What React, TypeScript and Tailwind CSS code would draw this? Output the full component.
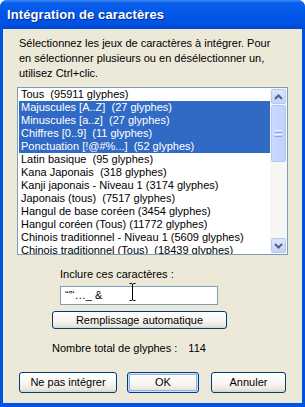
import React from "react";

const rows = [
  "Tous  (95911 glyphes)",
  "Majuscules [A..Z]  (27 glyphes)",
  "Minuscules [a..z]  (27 glyphes)",
  "Chiffres [0..9]  (11 glyphes)",
  "Ponctuation [!@#%...]  (52 glyphes)",
  "Latin basique  (95 glyphes)",
  "Kana Japonais  (318 glyphes)",
  "Kanji japonais - Niveau 1 (3174 glyphes)",
  "Japonais (tous)  (7517 glyphes)",
  "Hangul de base coréen (3454 glyphes)",
  "Hangul coréen (Tous) (11772 glyphes)",
  "Chinois traditionnel - Niveau 1 (5609 glyphes)",
  "Chinois traditionnel (Tous)  (18439 glyphes)",
];

const selected = [1, 2, 3, 4];

function XpButton({ label, width, focused }: { label: string; width: string; focused?: boolean }) {
  return (
    <div
      className={`${width} h-full flex items-center justify-center rounded-[3px] border border-[#003c74] bg-[linear-gradient(to_bottom,#ffffff_0%,#f7f6f2_55%,#ebe8df_85%,#d8d3c6_100%)] ${
        focused ? "shadow-[inset_0_0_0_1px_#cee1fb,inset_0_0_0_2px_#8fb0ec]" : ""
      }`}
    >
      {label}
    </div>
  );
}

function ScrollArrow({ up }: { up?: boolean }) {
  return (
    <div className="w-[15px] h-[15px] mx-auto rounded-[2px] border border-[#b7c9f3] bg-[linear-gradient(to_bottom,#dbe5fd,#c3d3fa)] flex items-center justify-center">
      <svg width="9" height="6" viewBox="0 0 9 6">
        <polyline
          points={up ? "1,5 4.5,1.5 8,5" : "1,1 4.5,4.5 8,1"}
          fill="none"
          stroke="#4d6185"
          strokeWidth="2"
        />
      </svg>
    </div>
  );
}

export default function App() {
  return (
    <div className="w-[305px] h-[407px] bg-white font-['Liberation_Sans',Arial,sans-serif] text-[11px] text-black">
      <div className="w-full h-full flex flex-col rounded-t-[7px] overflow-hidden bg-[#0054e3]">
        {/* title bar */}
        <div className="h-[29px] shrink-0 flex items-center pl-[7px] bg-[linear-gradient(to_bottom,#3d8cf8_0%,#0b5fea_10%,#0157e8_45%,#0053e4_80%,#0047d2_100%)]">
          <span className="text-white font-bold text-[13px] tracking-[0.1px] [text-shadow:1px_1px_0_#0a2a8a]">
            Intégration de caractères
          </span>
        </div>

        {/* body */}
        <div className="flex-1 mx-[3px] mb-[4px] bg-[#ece9d8] flex flex-col">
          <div className="ml-[16px] mt-[7px] leading-[15px]">
            Sélectionnez les jeux de caractères à intégrer. Pour
            <br />
            en sélectionner plusieurs ou en désélectionner un,
            <br />
            utilisez Ctrl+clic.
          </div>

          {/* list box */}
          <div className="ml-[14px] mt-[6px] w-[271px] h-[168px] border border-[#7f9db9] bg-white flex overflow-hidden">
            <div className="flex-1 pl-[1px] overflow-hidden">
              {rows.map((r, i) => (
                <div
                  key={r}
                  className={`h-[13px] leading-[13px] pl-[2px] whitespace-pre ${
                    selected.includes(i) ? "bg-[#316ac5] text-white" : ""
                  }`}
                >
                  {r}
                </div>
              ))}
            </div>
            <div className="w-[17px] h-full bg-[#f6f6f2] flex flex-col py-[1px]">
              <ScrollArrow up />
              <div className="mt-[1px] w-[15px] h-[57px] mx-auto rounded-[2px] border border-[#b7c9f3] bg-[linear-gradient(to_right,#cbd9fc,#c0d1fb)] flex flex-col items-center justify-center gap-[1px]">
                <div className="w-[7px] h-[1px] bg-[#eef3fe]" />
                <div className="w-[7px] h-[1px] bg-[#8ca6e2]" />
                <div className="w-[7px] h-[1px] bg-[#eef3fe]" />
                <div className="w-[7px] h-[1px] bg-[#8ca6e2]" />
              </div>
              <div className="flex-1" />
              <ScrollArrow />
            </div>
          </div>

          <div className="ml-[57px] mt-[13px] leading-[13px]">Inclure ces caractères :</div>

          <div className="relative ml-[57px] mt-[5px] w-[158px] h-[19px] border border-[#7f9db9] bg-white flex items-center pl-[4px] whitespace-pre">
            “”‘…_ &amp;
            <svg
              className="absolute left-[68px] top-[-4px]"
              width="7"
              height="18"
              viewBox="0 0 7 18"
            >
              <path d="M0.5 0.5 H2.5 Q3.5 0.5 3.5 2 V16 Q3.5 17.5 2.5 17.5 H0.5 M6.5 0.5 H4.5 Q3.5 0.5 3.5 2 M3.5 16 Q3.5 17.5 4.5 17.5 H6.5" fill="none" stroke="#000" strokeWidth="1" />
            </svg>
          </div>

          <div className="ml-[49px] mt-[6px] h-[18px]">
            <XpButton label="Remplissage automatique" width="w-[175px]" />
          </div>

          <div className="ml-[49px] mt-[13px] leading-[13px] flex">
            <span>Nombre total de glyphes :</span>
            <span className="ml-[11px]">114</span>
          </div>

          <div className="mt-[17px] h-[21px] flex">
            <div className="ml-[16px]">
              <XpButton label="Ne pas intégrer" width="w-[98px]" />
            </div>
            <div className="ml-[10px]">
              <XpButton label="OK" width="w-[72px]" focused />
            </div>
            <div className="ml-[12px]">
              <XpButton label="Annuler" width="w-[75px]" />
            </div>
          </div>
        </div>
      </div>
    </div>
  );
}
